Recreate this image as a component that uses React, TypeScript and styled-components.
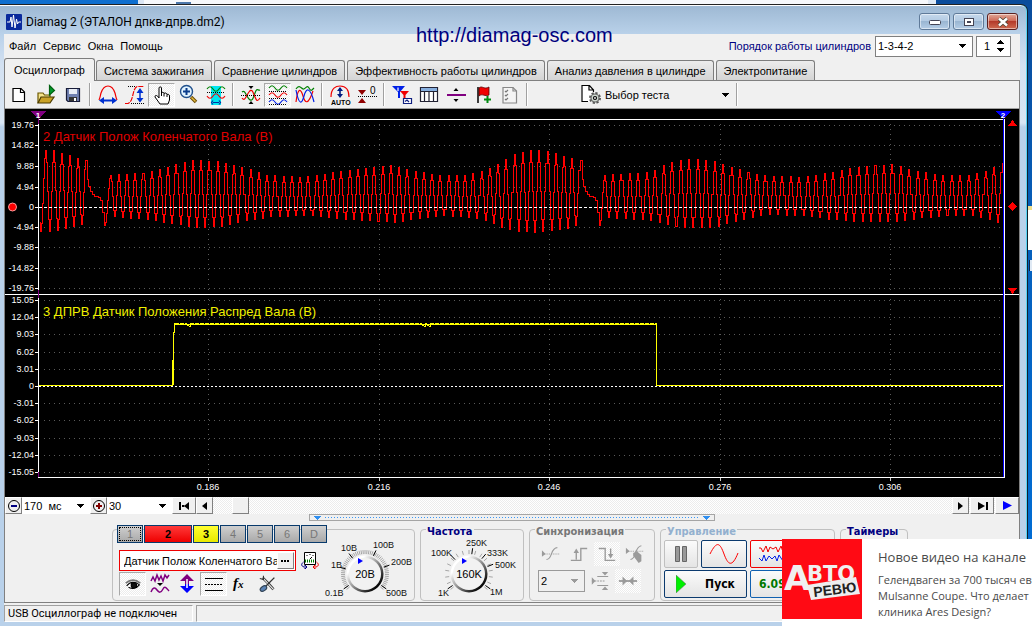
import React from "react";
import styled, { createGlobalStyle, css } from "styled-components";

const ui = '"Liberation Sans", Arial, sans-serif';
const segoe = '"Open Sans", "Noto Sans", sans-serif';
const tahoma = 'Roboto, "Noto Sans", sans-serif';
const face = "#f0f0f0";
const hatch = "repeating-conic-gradient(#ffffff 0% 25%, #ececec 0% 50%) 0 0 / 2px 2px";

const Global = createGlobalStyle`
  * { box-sizing: border-box; }
  body { margin: 0; background: #0b5cc0; font: 11px/14px ${ui}; color: #000; }
  button, input, select { font: inherit; color: inherit; }
  svg { display: block; }
`;

const Desktop = styled.div`
  position: relative;
  min-height: 100vh;
  display: flex;
  flex-direction: column;
  overflow: hidden;
  background: linear-gradient(#0a4c9c, #0560bd 40%, #0070da);
`;
const BackWindows = styled.div`
  display: flex;
  height: 4px;
  background: linear-gradient(90deg, #0f6fcf 20%, #0a4c9c 80%);
  padding-left: 138px;
  padding-right: 96px;
`;
const BackSheet = styled.div`
  flex: 1;
  background: #f6f8fb;
  border-left: 6px solid #dbe6f4;
  border-right: 8px solid #dfe9f4;
  padding: 2px 0 0 32px;
`;
const BackIcon = styled.div`
  width: 15px;
  height: 2px;
  background: #4d78ab;
`;
const DesktopItem = styled.div`
  position: absolute;
  right: 0;
  top: 206px;
  width: 4px;
  height: 44px;
  background: #fff;
  border-top: 4px solid #efe08f;
`;
const DesktopLabel = styled.div`
  position: absolute;
  right: 0;
  top: 260px;
  width: 3px;
  height: 11px;
  background: #dfe9f4;
  border-left: 1px solid #06264d;
`;

const Window = styled.main`
  flex: 1;
  display: flex;
  flex-direction: column;
  margin-right: 4px;
  padding: 0 7px 4px 4px;
  border-top: 1px solid #222;
  border-right: 1px solid #10202c;
  border-top-right-radius: 7px;
  box-shadow: inset -1px 0 #58d4f4, inset 0 1px #fff;
  background: linear-gradient(#9db8d3, #bad2ea 30px, #d3e1f1 60px, #d9e6f4 118px, #b9d1ea 122px);
`;
const TitleBar = styled.header`
  display: flex;
  align-items: center;
  height: 29px;
  padding: 4px 2px 0 2px;
  gap: 4px;
`;
const Title = styled.h1`
  flex: 1;
  margin: 0;
  font: 12px/16px ${tahoma};
`;
const WinButtons = styled.div`
  display: flex;
  gap: 3px;
`;
const WinButton = styled.button<{ $close?: boolean }>`
  width: 31px;
  height: 17px;
  padding: 0;
  display: grid;
  place-items: center;
  border: 1px solid ${(p) => (p.$close ? "#5a2020" : "#5f7a99")};
  border-radius: 3px;
  box-shadow: inset 0 0 0 1px rgba(255, 255, 255, 0.5);
  background: ${(p) =>
    p.$close
      ? "linear-gradient(#e0a898, #cf6a58 45%, #b43a2a 50%, #cf6a50)"
      : "linear-gradient(#c5d8ec, #b4cbe3 45%, #9ab6d2 50%, #b5cde6)"};
`;
const Watermark = styled.div`
  position: absolute;
  top: 23px;
  left: 416px;
  font-size: 20px;
  line-height: 24px;
  color: #00007e;
`;

const MenuRow = styled.div`
  display: flex;
  align-items: center;
  height: 24px;
  padding: 0 9px 0 5px;
  background: ${face};
`;
const Menu = styled.nav`
  flex: 1;
  display: flex;
  gap: 7px;
`;
const MenuItem = styled.button`
  border: 0;
  padding: 0;
  background: none;
  line-height: 16px;
`;
const OrderLabel = styled.label`
  color: #000080;
  margin-right: 4px;
`;
const SelectWrap = styled.span<{ $w: number; $h: number; $plain?: boolean; $off?: boolean }>`
  position: relative;
  width: ${(p) => p.$w}px;
  height: ${(p) => p.$h}px;
  border: ${(p) => (p.$plain ? "0" : p.$off ? "1px solid #9a9a9a" : "1px solid #7f7f7f")};
  background: ${(p) => (p.$off ? face : "#fff")};
  select {
    display: block;
    appearance: none;
    width: 100%;
    height: 100%;
    border: 0;
    padding: 0 0 0 2px;
    background: none;
  }
  svg {
    position: absolute;
    right: 6px;
    top: calc(50% - 2px);
    pointer-events: none;
  }
`;
const Spinner = styled.div`
  display: flex;
  align-items: center;
  width: 35px;
  height: 21px;
  margin-left: 3px;
  border: 1px solid #7f7f7f;
  background: #fff;
  input {
    width: 20px;
    border: 0;
    padding: 0 0 0 7px;
    background: none;
  }
`;
const Steps = styled.div`
  display: grid;
  gap: 4px;
  button { border: 0; padding: 0; background: none; }
`;

const Tabs = styled.div`
  display: flex;
  align-items: flex-end;
  gap: 2px;
  height: 22px;
  background: ${face};
`;
const Tab = styled.button<{ $on?: boolean }>`
  height: ${(p) => (p.$on ? 23 : 20)}px;
  margin-bottom: ${(p) => (p.$on ? -1 : 0)}px;
  margin-right: ${(p) => (p.$on ? -1 : 0)}px;
  padding: 0 ${(p) => (p.$on ? 9 : 7)}px;
  border: 1px solid #7d7d7d;
  border-bottom: 0;
  border-radius: 3px 3px 0 0;
  white-space: nowrap;
  z-index: 1;
  background: ${(p) => (p.$on ? face : "linear-gradient(#ececec, #d4d4d4)")};
`;
const Body = styled.div`
  flex: 1;
  border: 1px solid #808080;
  background: ${face};
`;
const Toolbar = styled.div`
  display: flex;
  align-items: center;
  height: 28px;
  border-bottom: 1px solid #a0a0a0;
  box-shadow: 0 1px #fff;
`;
const Tool = styled.button<{ $down?: boolean }>`
  width: 27px;
  height: 24px;
  padding: 0;
  border: 0;
  display: grid;
  place-items: center;
  background: none;
  ${(p) =>
    p.$down &&
    css`
      background: ${hatch};
      border: 1px solid #a8a8a8;
      border-right-color: #fff;
      border-bottom-color: #fff;
    `}
`;
const Sep = styled.span`
  width: 2px;
  height: 23px;
  margin: 0 3px;
  border-left: 1px solid #a0a0a0;
  border-right: 1px solid #fff;
`;
const TestPicker = styled.button`
  display: flex;
  align-items: center;
  gap: 2px;
  width: 202px;
  border: 0;
  padding: 0 4px 0 49px;
  background: none;
  span { flex: 1; text-align: left; }
`;

const Chart = styled.svg`
  width: 100%;
  height: auto;
  background: #000;
  font-family: ${ui};
`;

const ScrollRow = styled.div`
  display: flex;
  height: 17px;
  background: ${hatch};
`;
const Raised = styled.button<{ $w: number }>`
  width: ${(p) => p.$w}px;
  height: 17px;
  padding: 0;
  display: grid;
  place-items: center;
  border: 1px solid #fff;
  border-right-color: #808080;
  border-bottom-color: #808080;
  background: ${face};
`;
const Track = styled.div`
  flex: 1;
  padding-left: 19px;
`;
const NavEnd = styled.div`
  display: flex;
  gap: 1px;
`;
const Splitter = styled.div`
  display: flex;
  align-items: center;
  justify-content: space-between;
  width: 406px;
  height: 7px;
  margin-left: 304px;
  padding: 0 4px;
  border: 1px solid #a5a5a5;
  i {
    flex: 1;
    height: 1px;
    margin: 0 4px;
    background: repeating-linear-gradient(90deg, #3b97f5 0 1px, transparent 1px 3px);
  }
`;

const Panels = styled.div`
  display: flex;
  gap: 5px;
  padding: 8px 0 1px 107px;
`;
const Group = styled.section<{ $w: number }>`
  position: relative;
  flex: none;
  width: ${(p) => p.$w}px;
  height: 72px;
  border: 1px solid #c0c0c0;
  border-radius: 4px;
`;
const GroupTitle = styled.h2<{ $c: string }>`
  position: absolute;
  top: -5px;
  left: 5px;
  margin: 0;
  padding: 0 1px;
  font: bold 11px/13px "DejaVu Sans Condensed", "DejaVu Sans", sans-serif;
  color: ${(p) => p.$c};
  background: ${face};
`;
const ChannelGroup = styled(Group)`
  display: flex;
  gap: 4px;
`;
const ChannelSide = styled.div`
  width: 211px;
  margin-top: -5px;
  padding-left: 4px;
`;
const Channels = styled.div`
  position: relative;
  display: flex;
  gap: 1px;
`;
const Channel = styled.button<{ $tone?: "red" | "yellow" }>`
  flex: none;
  width: ${(p) => (p.$tone === "red" ? 48 : 26)}px;
  height: 18px;
  padding: 0;
  border: 1px solid #083a6c;
  font-weight: ${(p) => (p.$tone ? "bold" : "normal")};
  color: ${(p) => (p.$tone ? "#000" : "#777")};
  background: ${(p) =>
    p.$tone === "red"
      ? "linear-gradient(#ff3a3a, #ee0000)"
      : p.$tone === "yellow"
        ? "linear-gradient(#ffff30, #e8e800)"
        : "linear-gradient(#cfcfcf, #a9a9a9)"};
  ${(p) =>
    !p.$tone &&
    css`
      &:first-child { outline: 1px dotted #000; outline-offset: -3px; }
    `}
`;
const NameRow = styled.div`
  display: flex;
  align-items: center;
  gap: 5px;
  margin: 7px 0 1px 2px;
`;
const NameBox = styled.div`
  display: flex;
  width: 177px;
  height: 21px;
  padding: 1px;
  border: 1px solid #f00000;
  background: #fff;
  input {
    flex: 1;
    min-width: 0;
    border: 0;
    padding: 0 0 0 3px;
    background: none;
  }
`;
const IconRow = styled.div`
  display: flex;
  margin-left: 2px;
`;
const SyncGrid = styled.div`
  display: flex;
  flex-wrap: wrap;
  align-items: center;
  gap: 3px 2px;
  padding: 12px 0 0 8px;
`;
const Mini = styled.button<{ $down?: boolean }>`
  width: 26px;
  height: 24px;
  border: 0;
  padding: 0;
  display: grid;
  place-items: center;
  background: ${(p) => (p.$down ? hatch : "none")};
`;
const Control = styled.div`
  display: grid;
  grid-template-columns: 34px 46px 80px;
  grid-auto-rows: 28px;
  gap: 2px 3px;
  padding: 10px 0 0 3px;
`;
const Push = styled.button<{ $edge?: string; $wide?: boolean; $ink?: string }>`
  display: flex;
  align-items: center;
  justify-content: center;
  gap: 19px;
  padding: 0;
  grid-column: ${(p) => (p.$wide ? "span 2" : "auto")};
  border: 1px solid ${(p) => p.$edge ?? "#0b3a6e"};
  border-radius: 2px;
  background: linear-gradient(#fbfbfb, #e4e4e4);
  font: bold 12px/16px "DejaVu Sans Condensed", "DejaVu Sans", sans-serif;
  color: ${(p) => p.$ink ?? "#000"};
`;
const Readout = styled(Push)`
  justify-content: flex-start;
  padding-left: 8px;
`;
const StatusBar = styled.footer`
  display: flex;
  gap: 3px;
  height: 19px;
  padding-top: 2px;
  background: ${face};
  font: 11px/16px ${tahoma};
`;
const StatusCell = styled.div<{ $w?: number }>`
  flex: ${(p) => (p.$w ? `0 0 ${p.$w}px` : "1")};
  padding-left: 3px;
  border: 1px solid #a0a0a0;
  border-right-color: #fff;
  border-bottom-color: #fff;
`;

const Toast = styled.aside`
  position: absolute;
  right: 0;
  bottom: 0;
  width: 250px;
  height: 87px;
  display: flex;
  gap: 16px;
  overflow: hidden;
  background: #fff;
  font: 11px/16px ${segoe};
  color: #4a4a4a;
  white-space: nowrap;
  p { margin: 6px 0 0; }
`;
const ToastTitle = styled.h2`
  margin: 9px 0 0;
  font: 13px/18px ${segoe};
`;
const ToastLogo = styled.svg`
  flex: none;
`;

/* ---------- small drawings ---------- */

const Caret = ({ c = "#000", up = false }: { c?: string; up?: boolean }) => (
  <svg width="7" height="4" shapeRendering="crispEdges">
    <path d={up ? "M0 4L3.500 0L7 4Z" : "M0 0H7L3.500 4Z"} fill={c} />
  </svg>
);

type IconProps = { children: React.ReactNode; w?: number; h?: number };
const Icon = ({ children, w = 22, h = 22 }: IconProps) => (
  <svg width={w} height={h} viewBox="0 0 22 22" fill="none" stroke="#000" strokeWidth="1.2">
    {children}
  </svg>
);

const RED = "#f00000";
const BLUE = "#0020e8";
const GREEN = "#008000";
const PURPLE = "#800080";
const GREY = "#9a9a9a";
const wave = (y: number, a = 3) =>
  `M2 ${y}C4 ${y - a} 6 ${y - a} 8 ${y}S12 ${y + a} 14 ${y}S18 ${y - a} 20 ${y}`;

const NewIcon = () => (
  <Icon><path d="M5 4.500H13L16.500 8V17.500H5Z" fill="#fff" /><path d="M12.500 4.500V8.500H16.500" /></Icon>
);
const OpenIcon = () => (
  <Icon>
    <path d="M3 19V9H8L9.500 11H15V13" fill="#f4e48c" stroke="#6b5600" />
    <path d="M3 19L6 13H19L15 19Z" fill="#c9a227" stroke="#4a3b00" />
    <path d="M14.500 1.500V11L19.500 6.500Z" fill="#009a2c" stroke="#006010" />
  </Icon>
);
const SaveIcon = () => (
  <Icon>
    <path d="M4.500 4.500H17.500V17.500H6L4.500 16Z" fill="#7080b0" stroke="#181c38" />
    <path d="M7 5H15V10H7Z" fill="#e8ecf4" stroke="none" />
    <path d="M7 13H15V17H7Z" fill="#333" stroke="none" /><path d="M12 14H14V17H12Z" fill="#fff" stroke="none" />
  </Icon>
);
const WidthIcon = () => (
  <Icon>
    <path d="M2 16C3 14 3 13 4 9C6 3 9 2 11 2S16 3 18 9C19 13 19 14 20 16" stroke={RED} />
    <path d="M4 16.500H18" stroke="#0030d0" strokeWidth="2" />
    <path d="M2 16.500L7 13V20ZM20 16.500L15 13V20Z" fill="#0030d0" stroke="none" />
  </Icon>
);
const HeightIcon = () => (
  <Icon>
    <path d="M1 19.500H4C10 17 8 5 13 2.500H20" stroke={RED} strokeDasharray="5 1" />
    <path d="M4 2.500H12M7 19.500H20" strokeWidth="1" strokeDasharray="1 1" />
    <path d="M16 7V16" stroke="#0030d0" strokeWidth="1.500" />
    <path d="M16 4L12.500 9H19.500ZM16 18.500L12.500 14H19.500Z" fill="#0030d0" stroke="none" />
  </Icon>
);
const HandIcon = () => (
  <Icon>
    <path d="M8 14V4C8 2.500 10.500 2.500 10.500 4V9C11 8 13 8 13 9.500C14 8.500 16 9 16 10.500C17 10 18.500 10.500 18.500 12V16L17 20H9L4 13C3.500 11.500 5.500 11 6.500 12Z" fill="#fff" strokeWidth="1" />
    <path d="M10.500 9V12M13 9.500V12.500M16 10.500V13" strokeWidth="1" />
  </Icon>
);
const ZoomIcon = () => (
  <Icon>
    <path d="M13 13L18 18" stroke="#6a4a00" strokeWidth="3.500" /><path d="M13.500 13.500L17.500 17.500" stroke="#e4bc40" strokeWidth="1.500" />
    <circle cx="8.500" cy="7.500" r="6" fill="#e2f4ff" stroke="#20508c" strokeWidth="1.400" />
    <path d="M8.500 4V11M5 7.500H12" stroke="#0a3c8c" strokeWidth="2" />
  </Icon>
);
const RangeIcon = () => (
  <Icon>
    <path d="M6 2H16V21H6Z" fill="#00e6f0" stroke="none" />
    <path d={wave(5, 3)} stroke={GREEN} /><path d={wave(12, -3)} stroke={RED} />
    <path d="M2 8.500H20" strokeWidth="1" strokeDasharray="1 1" /><path d="M8 18.500H14M8 16.500L6.500 18.500L8 20.500M14 16.500L15.500 18.500L14 20.500" stroke="#0030a0" />
  </Icon>
);
const OverlapIcon = () => (
  <Icon>
    <path d="M2 8C5 5 6 12 9 15S13 15 15 9S18 7 20 6" stroke={GREEN} />
    <path d="M2 14C5 18 6 12 9 8S13 8 15 13S18 17 20 14" stroke={RED} />
    <path d="M1 11.500H21" strokeWidth="1" strokeDasharray="1 1" />
    <path d="M8.500 2H13.500L11 5ZM8.500 20H13.500L11 17Z" fill="#000" stroke="none" />
  </Icon>
);
const StackIcon = () => (
  <Icon>
    <path d={wave(4, 3)} stroke={GREEN} /><path d={wave(11, 3)} stroke={RED} /><path d={wave(18, 3)} stroke={BLUE} />
    <path d="M2 7.500H20M2 14.500H20M2 20.500H20" strokeWidth="1" strokeDasharray="1 1" />
  </Icon>
);
const MixIcon = () => (
  <Icon>
    <path d="M2 5C5 0 7 4 9 5S13 0 15 4S18 6 20 4" stroke={GREEN} />
    <path d="M2 18C4 2 7 5 9 12S14 22 19 7" stroke={RED} /><path d="M2 6C5 22 8 20 10 12S16 2 20 18" stroke={BLUE} />
  </Icon>
);
const AutoIcon = () => (
  <Icon>
    <path d="M2 13C2 4 7 2 11 2S20 4 20 13" stroke={RED} />
    <path d="M11 4V12" stroke="#001a80" strokeWidth="1.600" /><path d="M11 3L8 7H14ZM11 14L8 10H14Z" fill="#001a80" stroke="none" />
    <text x="2" y="21" fontSize="7" fontWeight="bold" fill="#000" stroke="none">AUTO</text>
  </Icon>
);
const ZeroIcon = () => (
  <Icon>
    <path d="M2 6H10L6 11ZM2 19H10L6 14Z" fill="#900000" stroke="none" /><path d="M2 12.500H21" strokeWidth="1" strokeDasharray="1 1" />
    <text x="14" y="10" fontSize="10" fill="#000" stroke="none">0</text>
  </Icon>
);
const FilterIcon = () => (
  <Icon>
    <path d="M1 2H14L9 8V14H7V8Z" fill={BLUE} stroke="none" /><path d="M7 3.500V7" stroke="#fff" />
    <path d="M9 7H18L14.500 11V17H12.500V11Z" fill={RED} stroke="none" />
    <path d="M12.500 14.500H20.500V19.500H12.500Z" fill="#fff" stroke="#102080" /><path d="M14 17.500L16 16L18 18" stroke="#102080" />
  </Icon>
);
const TableIcon = () => (
  <Icon>
    <path d="M2.500 3.500H19.500V17.500H2.500Z" fill="#fff" stroke="#223" /><path d="M3 4H19V7H3Z" fill="#86aede" stroke="none" />
    <path d="M2.500 7.500H19.500M6.500 7.500V17.500M11 7.500V17.500M15.500 7.500V17.500" stroke="#223" />
  </Icon>
);
const DivideIcon = () => (
  <Icon>
    <path d="M2 11H21" stroke={PURPLE} strokeWidth="2" /><path d="M8.500 7H13.500L11 4ZM8.500 15H13.500L11 18Z" fill="#000" stroke="none" />
  </Icon>
);
const FlagIcon = () => (
  <Icon>
    <path d="M6 3V19" strokeWidth="1.500" /><path d="M7 4C10 1 12 6 17 3V11C13 13 10 9 7 12Z" fill={RED} stroke="#500" strokeWidth="0.800" />
    <path d="M15.500 12V19M12 15.500H19" stroke="#008a10" strokeWidth="2" />
  </Icon>
);
const ListIcon = () => (
  <Icon>
    <path d="M4 3.500H14L17.500 7V19H4Z" fill="#f4f4f4" stroke="#888" /><path d="M14 3.500V7H17.500" stroke="#888" />
    <path d="M6 7L7 8L9 6M6 11L7 12L9 10M6 15L7 16L9 14" stroke="#777" />
  </Icon>
);
const TestIcon = () => (
  <svg width="23" height="22" viewBox="0 0 23 22" fill="none" stroke="#000" strokeWidth="1.200">
    <path d="M2 2H9L14 7V17H2Z" fill="#fff" stroke="#fff" /><path d="M8 17.500H2V1.500H9.500L13.500 6V8M9 2V6H13" />
    <circle cx="15" cy="14" r="4.500" fill="#d6dcd6" stroke="#555" strokeWidth="3" strokeDasharray="2 1.500" />
    <circle cx="15" cy="14" r="4" fill="#cfd8d0" stroke="#666" /><circle cx="15" cy="14" r="1.500" fill="#fff" />
  </svg>
);

/* ---------- oscilloscope ---------- */

// Crest position, crest level and the level of the trough that follows.
const crests: number[][] = [];
const spread = (x0: number, x1: number, n: number, keys: number[][]) => {
  for (let i = 0; i <= n; i++) {
    const x = x0 + ((x1 - x0) * i) / n;
    let k = 0;
    while (k < keys.length - 2 && keys[k + 1][0] < x) k++;
    const [a, b] = [keys[k], keys[k + 1]];
    const t = Math.max(0, Math.min(1, (x - a[0]) / (b[0] - a[0])));
    crests.push([x, a[1] + (b[1] - a[1]) * t, a[2] + (b[2] - a[2]) * t]);
  }
};
spread(45, 85, 5, [[45, 150, 231], [53, 150, 230], [85, 160, 222]]);
spread(110, 580, 57, [
  [110, 175, 216], [142, 173, 219], [167, 167, 223], [192, 160, 227], [217, 161, 226], [243, 167, 220],
  [268, 175, 216], [305, 177, 215], [345, 170, 219], [390, 165, 222], [415, 171, 218], [440, 175, 215],
  [466, 175, 217], [483, 171, 220], [499, 163, 228], [516, 153, 231], [532, 150, 232], [548, 151, 230],
  [564, 156, 228], [580, 160, 222],
]);
spread(604, 1002, 47, [
  [604, 175, 217], [637, 173, 219], [652, 171, 221], [669, 162, 226], [686, 159, 227], [710, 160, 227],
  [735, 168, 220], [760, 175, 214], [802, 177, 215], [827, 173, 219], [852, 167, 221], [896, 164, 221],
  [912, 170, 218], [940, 175, 215], [966, 175, 215], [984, 171, 219], [1002, 163, 225],
]);

// The trace is drawn as sampled steps: one vertical run for each pixel column.
const crankPath = (() => {
  let d = "M39.5 222";
  const step = (x: number, y: number) => {
    d += `H${Math.floor(x) + 0.5}V${Math.round(y)}`;
  };
  step(40, 231);
  const ease = (x0: number, y0: number, x1: number, y1: number) => {
    const n = Math.max(2, Math.round(x1 - x0));
    for (let i = 1; i <= n; i++) {
      const t = i / n;
      step(x0 + (x1 - x0) * t, y0 + ((y1 - y0) * (1 - Math.cos(Math.PI * t))) / 2);
    }
  };
  let px = 40;
  let py = 231;
  crests.forEach(([x, top, low], i) => {
    ease(px, py, x, top);
    const next = crests[i + 1];
    if (!next) return;
    if (next[0] - x > 15) {
      [[2, 19], [3, 26], [5, 31], [7, 34], [9, 36], [13, 37], [15, 40], [17, 52]].forEach(([dx, dy]) =>
        step(x + dx, top + dy),
      );
      px = x + 19;
      py = 225;
      step(px, py);
    } else {
      px = (x + next[0]) / 2;
      py = low;
      ease(x, top, px, py);
    }
  });
  return d;
})();

const camPath = (() => {
  let d = "M39 385.500H172.500V360H173.500V354V332H174.500V323.500";
  for (let x = 178; x < 655; x += 5) {
    const dip = x === 188 || (x > 418 && x < 430) ? 2 : 0;
    d += `L${x} ${323.5 + dip}L${x + 2} ${324.5 + dip}L${x + 3} 323.5`;
  }
  return d + "H656.500V385.500H1003";
})();

const upper: [string, number][] = [
  ["19.76", 125], ["14.82", 145], ["9.88", 166], ["4.94", 187], ["0", 207],
  ["-4.94", 227], ["-9.88", 247], ["-14.82", 268], ["-19.76", 288],
];
const lower: [string, number][] = [
  ["15.05", 300], ["12.04", 317], ["9.03", 334], ["6.02", 352], ["3.01", 369], ["0", 386],
  ["-3.01", 403], ["-6.02", 420], ["-9.03", 438], ["-12.04", 455], ["-15.05", 472],
];
const times: [string, number][] = [["0.186", 208], ["0.216", 379], ["0.246", 549], ["0.276", 720], ["0.306", 890]];

const Scope = () => (
  <Chart viewBox="5 109 1014 388" role="img" aria-label="Осциллограмма">
    <g shapeRendering="crispEdges" fill="none" strokeWidth="1">
      {[...upper, ...lower].map(([t, y]) => (
        <g key={t + y}>
          <path d={`M35 ${y + 0.5}H38`} stroke="#fff" />
          {t !== "0" && <path d={`M44 ${y + 0.5}H1003`} stroke="#5a5a5a" strokeDasharray="1 4" />}
        </g>
      ))}
      {times.map(([t, x]) => (
        <g key={t}>
          <path d={`M${x + 0.5} 124V477`} stroke="#5a5a5a" strokeDasharray="1 4" />
          <path d={`M${x + 0.5} 478V481`} stroke="#ccc" />
        </g>
      ))}
      <path d="M38 119.500H1004.500V477.500H38.500V119M5 294.500H1019" stroke="#fff" />
      <path d="M38.500 119V124M38.500 290V298M38.500 472V477" stroke={PURPLE} />
      <path d="M1003.500 117V477" stroke="#0000ff" />
      <path d={crankPath} stroke="#ff0000" />
      <path d="M39 207.500H1003" stroke="#fff" strokeDasharray="3 2" />
      <path d="M39 386.500H1003" stroke="#fff" strokeDasharray="2 2" />
      <path d={camPath} stroke="#ffff00" />
      <path d="M175 324.500H656M173.500 332V385" stroke="#ffff00" />
      <path d="M31 111H46L38.500 119Z" fill={PURPLE} />
      <path d="M996 111H1011L1003.500 119Z" fill="#0000ff" />
      <path d="M1008 126H1017L1012.500 120ZM1008 288H1017L1012.500 294ZM1008 206.500L1012.500 202L1017 206.500L1012.500 211Z" fill="#ff0000" />
    </g>
    <circle cx="12.500" cy="207" r="4" fill="#ff0000" stroke="#ff9a9a" />
    <g fill="#fff" fontSize="9">
      {[...upper, ...lower].map(([t, y]) => (
        <text key={t + y} x="34" y={y + 3} textAnchor="end">{t}</text>
      ))}
      {times.map(([t, x]) => (
        <text key={t} x={x} y="490" textAnchor="middle">{t}</text>
      ))}
      <text x="38" y="118" textAnchor="middle" fontSize="8" fontWeight="bold">1</text>
      <text x="1003" y="118" textAnchor="middle" fontSize="8" fontWeight="bold">2</text>
    </g>
    <g fontSize="13">
      <text x="43" y="141" fill="#e00000">2 Датчик Полож Коленчатого Вала (В)</text>
      <text x="43" y="316" fill="#f0f000">3 ДПРВ Датчик Положения Распред Вала (В)</text>
    </g>
  </Chart>
);

const KnobSvg = styled.svg`
  flex: none;
  overflow: visible;
`;
type KnobProps = { w: number; x: number; cx: number; value: string; fine?: boolean; labels: [string, number, number][]; marks: number[] };
const Knob = ({ w, x, cx, value, fine, labels, marks }: KnobProps) => {
  const id = fine ? "rimA" : "rimB";
  const ray = (deg: number, r0: number, r1: number) => {
    const a = (deg * Math.PI) / 180;
    return `M${cx + r0 * Math.sin(a)} ${574 - r0 * Math.cos(a)}L${cx + r1 * Math.sin(a)} ${574 - r1 * Math.cos(a)}`;
  };
  const steps = fine ? 54 : 16;
  return (
    <KnobSvg width={w} height="70" viewBox={`${x} 530 ${w} 70`} role="img" aria-label={value}>
      <defs>
        <linearGradient id={id} x1="0" y1="0" x2="1" y2="1">
          <stop offset="0.250" stopColor="#fff" /><stop offset="0.850" stopColor="#000" />
        </linearGradient>
      </defs>
      <path
        d={Array.from({ length: steps + 1 }, (_, i) => ray(-130 + (260 * i) / steps, 20, 24)).join("")}
        stroke="#a6a6a6"
        strokeWidth="1"
      />
      <path d={marks.map((m) => ray(m, 20, 26)).join("")} stroke="#000" />
      <circle cx={cx} cy="574" r="18.500" fill={`url(#${id})`} />
      <circle cx={cx} cy="574" r="16" fill="#f2f2f2" />
      <path d={`M${cx - 7} 558V564L${cx - 2} 561Z`} fill="#0000ff" />
      <text x={cx} y="578" textAnchor="middle" fontSize="11">{value}</text>
      <g fontSize="9" fill="#111">
        {labels.map(([t, lx, ly]) => <text key={t} x={lx} y={ly}>{t}</text>)}
      </g>
    </KnobSvg>
  );
};

const tools: (null | [string, React.FC, boolean?])[] = [
  ["Новый", NewIcon], ["Открыть", OpenIcon], ["Сохранить", SaveIcon], null,
  ["Ширина", WidthIcon], ["Высота", HeightIcon], ["Рука", HandIcon, true], ["Лупа", ZoomIcon], ["Диапазон", RangeIcon], null,
  ["Совместить", OverlapIcon], ["Разделить", StackIcon, true], ["Наложить", MixIcon], null,
  ["Авто", AutoIcon], ["Ноль", ZeroIcon], null,
  ["Фильтр", FilterIcon], ["Таблица", TableIcon], ["Линия", DivideIcon], ["Метка", FlagIcon], ["Список", ListIcon], null,
];
const tabs = ["Осциллограф", "Система зажигания", "Сравнение цилиндров", "Эффективность работы цилиндров", "Анализ давления в цилиндре", "Электропитание"];

export default function App() {
  return (
    <Desktop>
      <Global />
      <BackWindows><BackSheet><BackIcon /></BackSheet></BackWindows>
      <DesktopItem /><DesktopLabel />
      <Window>
        <TitleBar>
          <svg width="16" height="16" viewBox="0 0 16 16">
            <rect width="16" height="16" rx="1" fill="#0a2a9c" />
            <path d="M1 8H4L5 3L6 13L7.500 1L9 14L10.500 5L11.500 10L12.500 8H15" stroke="#fff" fill="none" />
          </svg>
          <Title>Diamag 2 (ЭТАЛОН дпкв-дпрв.dm2)</Title>
          <WinButtons>
            <WinButton aria-label="Свернуть"><svg width="12" height="6"><rect x="0.500" y="1.500" width="11" height="4" rx="1" fill="#fff" stroke="#445" /></svg></WinButton>
            <WinButton aria-label="Развернуть"><svg width="12" height="10"><rect x="1.500" y="1.500" width="9" height="7" fill="#fff" stroke="#445" /><rect x="4.500" y="4.500" width="3" height="1" fill="none" stroke="#445" /></svg></WinButton>
            <WinButton $close aria-label="Закрыть"><svg width="12" height="10"><path d="M2 1.500L10 8.500M10 1.500L2 8.500" stroke="#443" strokeWidth="4" /><path d="M2 1.500L10 8.500M10 1.500L2 8.500" stroke="#fff" strokeWidth="2.500" /></svg></WinButton>
          </WinButtons>
        </TitleBar>
        <MenuRow>
          <Menu>{["Файл", "Сервис", "Окна", "Помощь"].map((m) => <MenuItem key={m}>{m}</MenuItem>)}</Menu>
          <OrderLabel htmlFor="order">Порядок работы цилиндров</OrderLabel>
          <SelectWrap $w={98} $h={21}><select id="order"><option>1-3-4-2</option></select><Caret /></SelectWrap>
          <Spinner>
            <input aria-label="Номер цилиндра" defaultValue="1" />
            <Steps>
              <button aria-label="Больше"><Caret up /></button>
              <button aria-label="Меньше"><Caret /></button>
            </Steps>
          </Spinner>
        </MenuRow>
        <Tabs>{tabs.map((t, i) => <Tab key={t} $on={i === 0}>{t}</Tab>)}</Tabs>
        <Body>
          <Toolbar>
            {tools.map((t, i) => {
              if (!t) return <Sep key={i} />;
              const [name, Glyph, down] = t;
              return <Tool key={i} $down={down} aria-label={name}><Glyph /></Tool>;
            })}
            <TestPicker><TestIcon /><span>Выбор теста</span><Caret /></TestPicker>
            <Sep />
          </Toolbar>
          <Scope />
          <ScrollRow>
            <Raised $w={17} aria-label="Сжать"><svg width="14" height="14" fill="none" stroke="#000"><circle cx="7" cy="7" r="5.500" /><path d="M4 7H10" stroke="#000080" strokeWidth="2" /></svg></Raised>
            <SelectWrap $w={68} $h={17} $plain><select aria-label="Длительность"><option>170{"\u00a0\u00a0"}мс</option></select><Caret /></SelectWrap>
            <Raised $w={17} aria-label="Растянуть"><svg width="14" height="14" fill="none" stroke="#000"><circle cx="7" cy="7" r="5.500" /><path d="M4 7H10M7 4V10" stroke="#800000" strokeWidth="2" /></svg></Raised>
            <SelectWrap $w={65} $h={17} $plain><select aria-label="Масштаб"><option>30</option></select><Caret /></SelectWrap>
            <Raised $w={24} aria-label="В начало"><svg width="11" height="8"><path d="M0 0H2V8H0ZM10 0V8L5 4ZM6 3H3V5H6Z" /></svg></Raised>
            <Raised $w={17} aria-label="Назад"><svg width="5" height="8"><path d="M5 0V8L0 4Z" /></svg></Raised>
            <Track><Raised $w={17} aria-label="Ползунок" /></Track>
            <NavEnd>
              <Raised $w={17} aria-label="Вперёд"><svg width="5" height="8"><path d="M0 0V8L5 4Z" /></svg></Raised>
              <Raised $w={24} aria-label="В конец"><svg width="11" height="8"><path d="M9 0H11V8H9ZM1 0V8L8 4Z" /></svg></Raised>
              <Raised $w={24} aria-label="Воспроизвести"><svg width="9" height="9"><path d="M0 0V9L9 4.500Z" fill="#0000ff" /></svg></Raised>
            </NavEnd>
          </ScrollRow>
          <Splitter><Caret c="#2f8ff0" /><i /><Caret c="#2f8ff0" /></Splitter>
          <Panels>
            <ChannelGroup $w={303}>
              <ChannelSide>
                <Channels>
                  <Channel>1</Channel><Channel $tone="red">2</Channel><Channel $tone="yellow">3</Channel>
                  <Channel>4</Channel><Channel>5</Channel><Channel>6</Channel><Channel>D</Channel>
                </Channels>
                <NameRow>
                  <NameBox>
                    <input aria-label="Название канала" defaultValue="Датчик Полож Коленчатого Вала (В)" />
                    <Raised $w={17} aria-label="Выбрать"><svg width="9" height="2"><path d="M0 0H2V2H0ZM3 0H5V2H3ZM6 0H8V2H6Z" /></svg></Raised>
                  </NameBox>
                  <svg width="18" height="19" fill="none" stroke="#000">
                    <path d="M3.500 1.500H14.500V13.500H3.500Z" fill="#fff" /><path d="M4 10H14" stroke={GREEN} strokeWidth="3" strokeDasharray="1 1" />
                    <path d="M6 4V5M9 3V4M12 4V5M9 8L11 6" />
                    <path d="M2.500 11C0 13 0 15 3 16M4 14V18L6 16Z" stroke="#000080" /><path d="M15.500 11C18 13 18 15 15 16M14 14V18L12 16Z" stroke={RED} />
                  </svg>
                </NameRow>
                <IconRow>
                  <Tool $down aria-label="Видимость"><Icon w={20}><path d="M4 13C8 8 14 8 18 12C15 16 9 17 6 14.500" fill="#fff" /><circle cx="12" cy="12.500" r="3" fill="#111" /><path d="M3 10C8 6 14 6 19 10" strokeWidth="2" stroke="#777" /></Icon></Tool>
                  <Tool aria-label="Сглаживание"><Icon><path d="M2 8L4 4L6 8L8 2L10 7L12 3L14 8L16 2L18 5L20 2M2 19C4 14 6 14 8 17S12 20 14 16S18 16 20 18" stroke={PURPLE} strokeWidth="1.500" /><path d="M8 10H14L11 13Z" fill="#000" stroke="none" /></Icon></Tool>
                  <Tool aria-label="Смещение"><Icon><path d="M11 1L18 8H13V11H9V8H4Z" fill={PURPLE} stroke="none" /><path d="M11 20L18 13H13V11H9V13H4Z" fill="#0000ff" stroke="none" /><path d="M11 6V15" stroke="#fff" strokeWidth="1.500" /></Icon></Tool>
                  <Tool $down aria-label="Уровни"><Icon><path d="M2 5.500H20M2 17.500H20" /><path d="M2 11.500H20" strokeDasharray="2 1" /></Icon></Tool>
                  <Tool aria-label="Функция"><Icon><text x="3" y="15" fontSize="15" fontStyle="italic" fontWeight="bold" fontFamily="Liberation Serif" fill="#000" stroke="none">f<tspan fontSize="11">x</tspan></text></Icon></Tool>
                  <Tool aria-label="Настройка"><Icon w={20}><path d="M5 4L11 10L17 17" stroke="#333" strokeWidth="3" /><path d="M5 4L17 17" stroke="#eee" /><path d="M18 4L8 14" stroke="#333" strokeWidth="1.500" /><ellipse cx="6" cy="16" rx="4" ry="2.500" fill="#5b83b5" stroke="#345" transform="rotate(-35 6 16)" /><path d="M2 5L6 6L6 2" stroke="#333" /></Icon></Tool>
                </IconRow>
              </ChannelSide>
              <Knob
                fine w={86} x={329} cx={366} value="20В" marks={[-125, -75, -38, 25, 70, 125]}
                labels={[["10В", 342, 551], ["100В", 374, 548], ["1В", 332, 568], ["200В", 392, 565], ["0.1В", 326, 596], ["500В", 387, 596]]}
              />
            </ChannelGroup>
            <Group $w={104}>
              <Knob
                w={100} x={422} cx={470} value="160K" marks={[-125, -44, 8, 40, 68, 125]}
                labels={[["250K", 467, 546], ["100K", 432, 556], ["333K", 488, 556], ["500K", 496, 568], ["1K", 439, 596], ["1M", 491, 595]]}
              />
              <GroupTitle $c="#000080">Частота</GroupTitle>
            </Group>
            <Group $w={126}>
              <GroupTitle $c="#777">Синхронизация</GroupTitle>
              <SyncGrid>
                <Mini aria-label="Уровень"><Icon w={20}><path d="M6 17C13 17 10 4 18 4" stroke={GREY} /><path d="M1 11H20" stroke={GREY} strokeDasharray="1 1" /><path d="M1 7V14L5 11Z" fill={GREY} stroke="none" /></Icon></Mini>
                <Mini aria-label="Фронт"><Icon w={20}><path d="M2 18H13V5H20M8 17V8" stroke={GREY} strokeWidth="1.500" /><path d="M5 10L8 5L11 10Z" fill={GREY} stroke="none" /></Icon></Mini>
                <Mini $down aria-label="Спад"><Icon w={20}><path d="M2 5H9V18H20M15 5V13" stroke={GREY} strokeWidth="1.500" /><path d="M12 11L15 16L18 11Z" fill={GREY} stroke="none" /></Icon></Mini>
                <Mini aria-label="Ручная"><Icon w={20}><path d="M6 17C13 17 10 3 18 2" stroke={GREY} /><path d="M1 8H20" stroke={GREY} strokeDasharray="1 1" /><path d="M1 4V11L5 8ZM9 10L13 8L18 12V19L15 21L9 13Z" fill={GREY} stroke="none" /></Icon></Mini>
                <SelectWrap $w={47} $h={22} $off><select aria-label="Канал синхронизации"><option>2</option></select><Caret c={GREY} /></SelectWrap>
                <Mini aria-label="Окно"><Icon w={20}><path d="M2 11H16" stroke={GREY} strokeDasharray="2 1" /><path d="M8 6H20M8 16H20" stroke={GREY} /><path d="M2 7V15L6 11ZM13 1H20L16.500 5ZM13 21H20L16.500 17Z" fill={GREY} stroke="none" /></Icon></Mini>
                <Mini $down aria-label="Сжатие"><Icon w={20}><path d="M1 11H21" stroke={GREY} strokeWidth="2" /><path d="M5 6V16L10 11ZM17 6V16L12 11Z" fill={GREY} stroke="none" /></Icon></Mini>
              </SyncGrid>
            </Group>
            <Group $w={175}>
              <GroupTitle $c="#93b0cf">Управление</GroupTitle>
              <Control>
                <Push $edge="#c0c0c0" aria-label="Пауза"><svg width="12" height="16"><path d="M0.500 0.500H4.500V15.500H0.500ZM7.500 0.500H11.500V15.500H7.500Z" fill="#999" stroke="#666" /></svg></Push>
                <Push aria-label="Синус"><svg width="30" height="20"><path d="M1 10C8 -4 11 -1 15 10S23 24 29 9" fill="none" stroke="#ff0000" /></svg></Push>
                <Readout $edge="#f00000" aria-label="Сигналы"><svg width="60" height="20" fill="none"><path d="M0 4H2L4 8L7 2L9 8L11 3L14 5L17 3L19 8L22 2L24 8L26 3L30 5L33 3L36 8L40 3" stroke={RED} /><path d="M0 14L3 17L5 11L7 17L10 12L13 15L16 12L18 17L20 11L24 17L26 12L30 15L35 12L40 16" stroke={BLUE} /></svg></Readout>
                <Push $wide><svg width="10" height="18"><path d="M0 0V18L10 9Z" fill="#00f000" stroke="#666" strokeWidth="0.500" /></svg>Пуск</Push>
                <Readout $edge="#1060b0" $ink="#007800">6.09</Readout>
              </Control>
            </Group>
            <Group $w={68}><GroupTitle $c="#000080">Таймеры</GroupTitle></Group>
          </Panels>
        </Body>
        <StatusBar><StatusCell $w={189}>USB Осциллограф не подключен</StatusCell><StatusCell /></StatusBar>
      </Window>
      <Watermark>http://diamag-osc.com</Watermark>
      <Toast>
        <ToastLogo width="80" height="80" viewBox="0 0 80 80">
          <rect width="80" height="80" fill="#ff0a14" />
          <g fontFamily="DejaVu Sans" fontWeight="bold" fill="#f0f0f0">
            <text x="2" y="51" fontSize="34">А</text>
            <text x="25" y="42" fontSize="21">ВТО</text>
          </g>
          <path d="M25 46L74 38L78 55L29 61Z" fill="#eee" />
          <text x="32" y="58" fontFamily="Liberation Sans" fontWeight="bold" fontSize="14" fill="#222" transform="rotate(-7 32 58)">РЕВЮ</text>
        </ToastLogo>
        <div>
          <ToastTitle>Новое видео на канале</ToastTitle>
          <p>Гелендваген за 700 тысяч ев<br />Mulsanne Coupe. Что делает<br />клиника Ares Design?</p>
        </div>
      </Toast>
    </Desktop>
  );
}
